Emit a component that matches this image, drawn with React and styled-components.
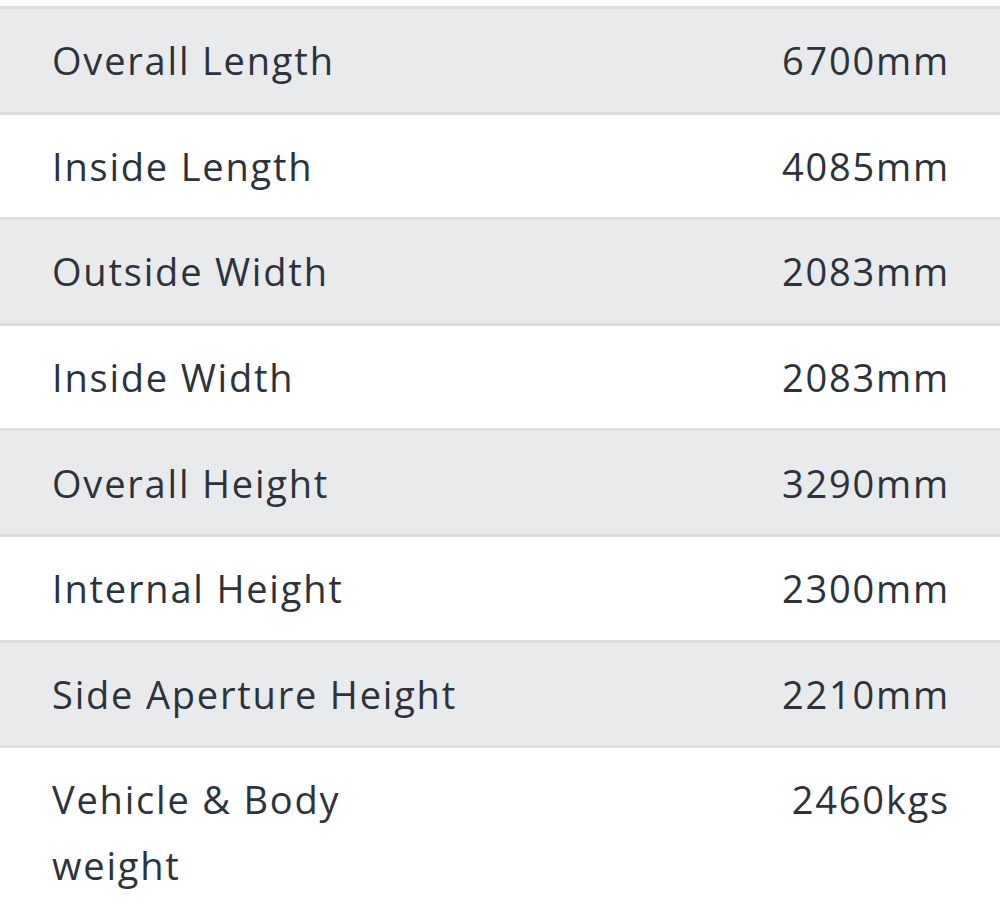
import React from "react";
import styled, { createGlobalStyle } from "styled-components";

const GlobalStyle = createGlobalStyle`
  html, body {
    margin: 0;
    padding: 0;
    background: #fff;
  }
`;

const SpecTable = styled.div`
  padding-top: 6px;
  font-family: "Open Sans", "Liberation Sans", sans-serif;
  color: #2c333c;
`;

const SpecRow = styled.div`
  display: flex;
  justify-content: space-between;
  align-items: flex-start;
  border-top: 3.5px solid #dddddd;
  background: ${(p) => (p.$shaded ? "#e9eaec" : "#ffffff")};
  padding: 18.3px 50px 18.3px 52px;
  font-size: 38px;
  line-height: 66px;
  letter-spacing: 1.8px;
`;

const Label = styled.div`
  width: 416px;
`;

const Value = styled.div`
  text-align: right;
  white-space: nowrap;
`;

const specs = [
  ["Overall Length", "6700mm"],
  ["Inside Length", "4085mm"],
  ["Outside Width", "2083mm"],
  ["Inside Width", "2083mm"],
  ["Overall Height", "3290mm"],
  ["Internal Height", "2300mm"],
  ["Side Aperture Height", "2210mm"],
  ["Vehicle & Body weight", "2460kgs"],
];

export default function App() {
  return (
    <>
      <GlobalStyle />
      <SpecTable>
        {specs.map(([label, value], i) => (
          <SpecRow key={label} $shaded={i % 2 === 0}>
            <Label>{label}</Label>
            <Value>{value}</Value>
          </SpecRow>
        ))}
      </SpecTable>
    </>
  );
}
